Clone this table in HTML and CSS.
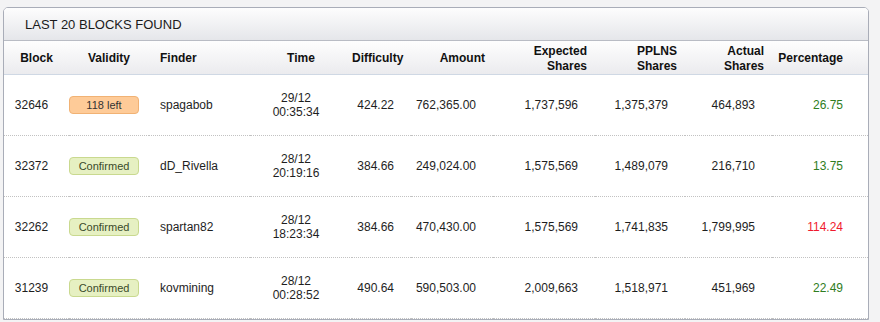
FILE: index.html
```html
<!DOCTYPE html>
<html>
<head>
<meta charset="utf-8">
<link rel="stylesheet" href="styles.css">
</head>
<body>
<div class="panel">
  <div class="panel-title">Last 20 Blocks Found</div>
  <table class="blocks">
    <colgroup>
      <col class="c-block"><col class="c-valid"><col class="c-finder"><col class="c-time"><col class="c-diff"><col class="c-amount"><col class="c-exp"><col class="c-pplns"><col class="c-actual"><col class="c-pct">
    </colgroup>
    <thead>
      <tr>
        <th class="ctr">Block</th>
        <th class="ctr">Validity</th>
        <th class="lft">Finder</th>
        <th class="ctr">Time</th>
        <th class="rgt">Difficulty</th>
        <th class="rgt">Amount</th>
        <th class="rgt">Expected<br>Shares</th>
        <th class="rgt">PPLNS<br>Shares</th>
        <th class="rgt">Actual<br>Shares</th>
        <th class="pct">Percentage</th>
      </tr>
    </thead>
    <tbody>
      <tr>
        <td class="ctr">32646</td>
        <td class="ctr"><span class="badge pending">118 left</span></td>
        <td class="lft">spagabob</td>
        <td class="ctr">29/12<br>00:35:34</td>
        <td class="rgt">424.22</td>
        <td class="rgt">762,365.00</td>
        <td class="rgt">1,737,596</td>
        <td class="rgt">1,375,379</td>
        <td class="rgt">464,893</td>
        <td class="pct good">26.75</td>
      </tr>
      <tr>
        <td class="ctr">32372</td>
        <td class="ctr"><span class="badge ok">Confirmed</span></td>
        <td class="lft">dD_Rivella</td>
        <td class="ctr">28/12<br>20:19:16</td>
        <td class="rgt">384.66</td>
        <td class="rgt">249,024.00</td>
        <td class="rgt">1,575,569</td>
        <td class="rgt">1,489,079</td>
        <td class="rgt">216,710</td>
        <td class="pct good">13.75</td>
      </tr>
      <tr>
        <td class="ctr">32262</td>
        <td class="ctr"><span class="badge ok">Confirmed</span></td>
        <td class="lft">spartan82</td>
        <td class="ctr">28/12<br>18:23:34</td>
        <td class="rgt">384.66</td>
        <td class="rgt">470,430.00</td>
        <td class="rgt">1,575,569</td>
        <td class="rgt">1,741,835</td>
        <td class="rgt">1,799,995</td>
        <td class="pct bad">114.24</td>
      </tr>
      <tr>
        <td class="ctr">31239</td>
        <td class="ctr"><span class="badge ok">Confirmed</span></td>
        <td class="lft">kovmining</td>
        <td class="ctr">28/12<br>00:28:52</td>
        <td class="rgt">490.64</td>
        <td class="rgt">590,503.00</td>
        <td class="rgt">2,009,663</td>
        <td class="rgt">1,518,971</td>
        <td class="rgt">451,969</td>
        <td class="pct good">22.49</td>
      </tr>
    </tbody>
  </table>
</div>
</body>
</html>
```
FILE: styles.css
```css
html, body {
  margin: 0;
  padding: 0;
  background: #f3f3f4;
}
body {
  font-family: "Liberation Sans", Arial, sans-serif;
  font-size: 12px;
  color: #1e1e1e;
  padding: 7px 0 0 3px;
}
.panel {
  width: 864px;
  border: 1px solid #a9adb8;
  border-radius: 5px 5px 0 0;
  background: #fff;
  overflow: hidden;
}
.panel-title {
  height: 32px;
  line-height: 34px;
  padding-left: 21px;
  font-size: 13px;
  text-transform: uppercase;
  color: #1a1a1a;
  background: linear-gradient(#fdfdfd, #e5e6ea);
  border-bottom: 1px solid #b9bcc4;
}
.blocks {
  width: 864px;
  table-layout: fixed;
  border-collapse: collapse;
}
.c-block { width: 65px; }
.c-valid { width: 80px; }
.c-finder { width: 101px; }
.c-time { width: 102px; }
.c-diff { width: 59px; }
.c-amount { width: 82px; }
.c-exp { width: 102px; }
.c-pplns { width: 90px; }
.c-actual { width: 87px; }
.c-pct { width: 96px; }

.blocks th {
  height: 31px;
  padding: 2px 0 0 0;
  font-weight: bold;
  line-height: 15px;
  color: #111;
  background: linear-gradient(#fefefe, #ebebee);
  border-bottom: 1px solid #cfd8e4;
  white-space: nowrap;
}
.blocks td {
  height: 60px;
  padding: 0;
  line-height: 14px;
  border-bottom: 1px dotted #c2c2c2;
  white-space: nowrap;
}
.blocks th.ctr { text-align: center; }
.blocks td.ctr { text-align: center; padding-right: 10px; }
.blocks .lft { text-align: left; padding-left: 11px; }
.blocks th.rgt { text-align: right; padding-right: 8px; }
.blocks td.rgt { text-align: right; padding-right: 17px; }
.blocks .pct { text-align: right; padding-right: 25px; }

.badge {
  display: inline-block;
  box-sizing: border-box;
  width: 70px;
  height: 18px;
  line-height: 16px;
  font-size: 11px;
  border-radius: 4px;
  vertical-align: middle;
  text-align: center;
}
.pending {
  background: #fecb98;
  border: 1px solid #f1b274;
  color: #333;
}
.ok {
  background: #e6f0c2;
  border: 1px solid #c9d98f;
  color: #3a4a2a;
}
.good { color: #2f7d21; }
.bad { color: #f01a2e; }
```
